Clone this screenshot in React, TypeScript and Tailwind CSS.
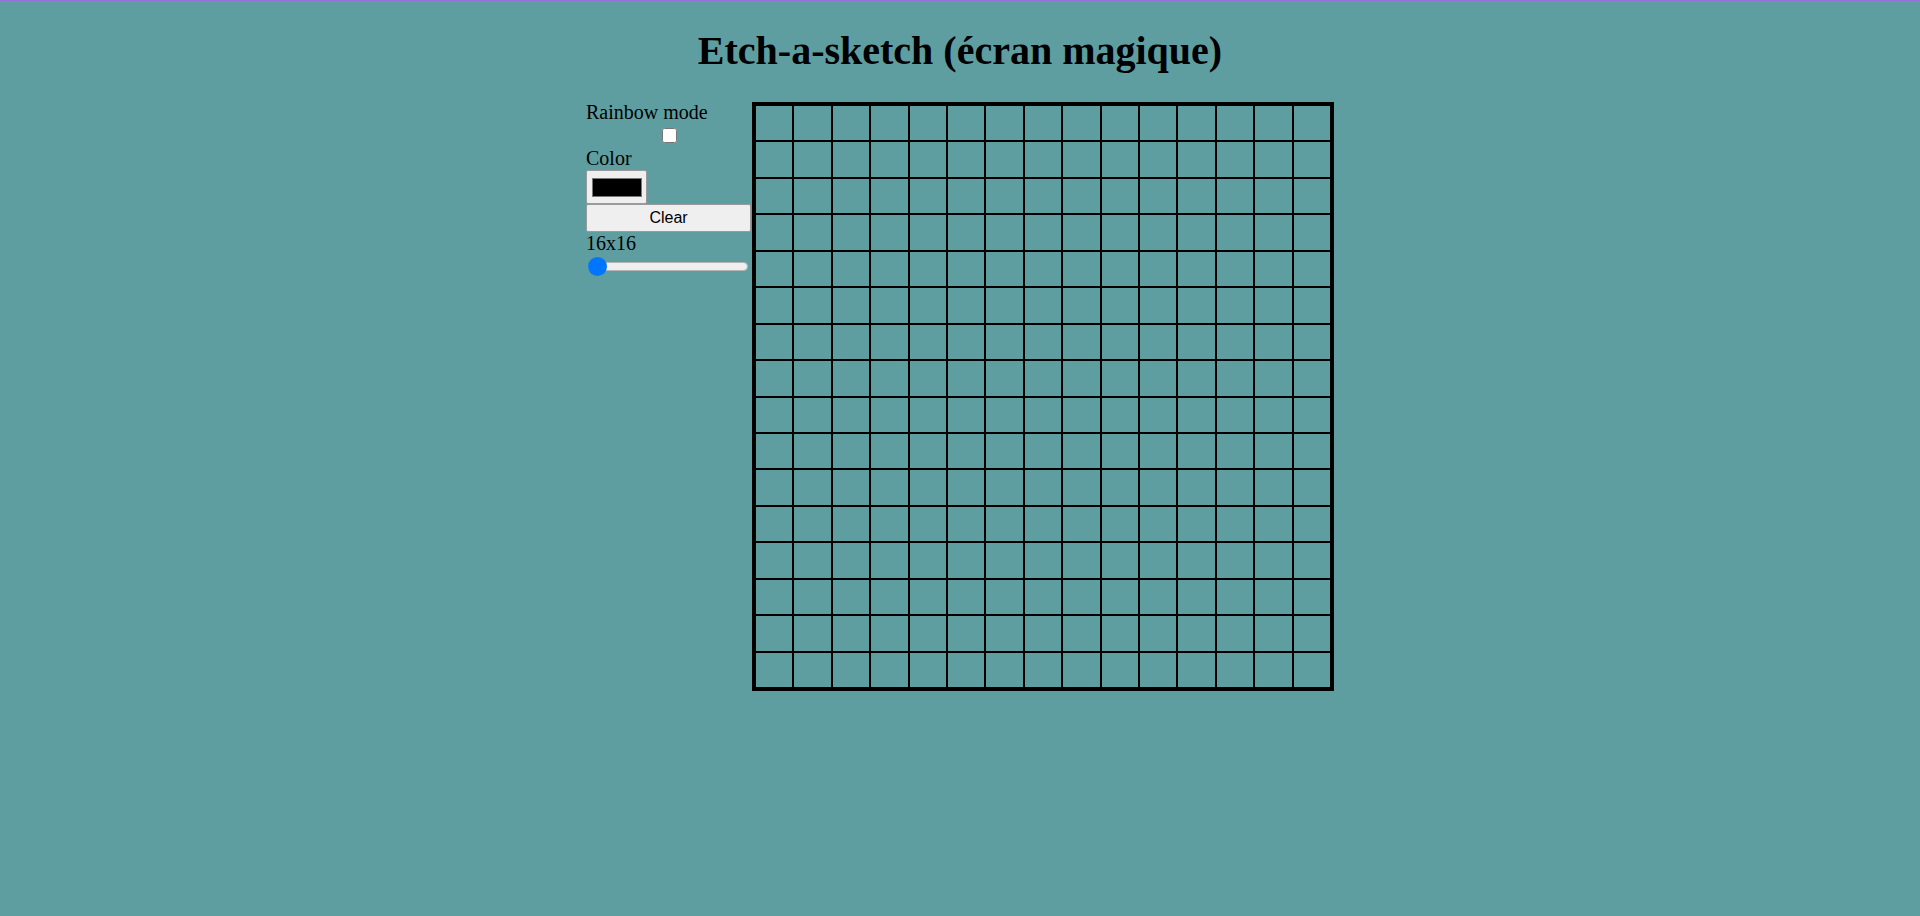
const rows = Array.from({ length: 16 }, (_, i) => i);
const cols = Array.from({ length: 15 }, (_, i) => i);

function Controls() {
  return (
    <div className="w-[166px] flex flex-col">
      <div className="leading-[23px]">Rainbow mode</div>
      <div className="h-[23px] flex items-center justify-center">
        <input type="checkbox" className="w-[15px] h-[15px] m-0" readOnly />
      </div>
      <div className="leading-[23px]">Color</div>
      <div className="w-[61px] h-[34px] bg-[#efefef] border border-[#9a9a9a] rounded-[2px] flex items-center justify-center">
        <div className="w-[50px] h-[19px] bg-black border border-[#777777]" />
      </div>
      <button className="w-[165px] h-[28px] bg-[#efefef] border border-[#9a9a9a] rounded-[2px] font-['Liberation_Sans',Arial,sans-serif] text-[16px] leading-none text-black">
        Clear
      </button>
      <div className="leading-[22px]">16x16</div>
      <div className="relative h-[25px] w-[162px] flex items-center">
        <div className="ml-[2px] w-[160px] h-[9px] rounded-full bg-[#efefef] border border-[#b5b5b5]" />
        <div className="absolute left-[2px] top-[3px] w-[19px] h-[19px] rounded-full bg-[#0075ff]" />
      </div>
    </div>
  );
}

function Board() {
  return (
    <div className="mt-[1px] w-[582px] h-[589px] border-[3px] border-black flex flex-col">
      {rows.map((r) => (
        <div key={r} className="flex flex-1">
          {cols.map((c) => (
            <div key={c} className="flex-1 border border-black" />
          ))}
        </div>
      ))}
    </div>
  );
}

export default function App() {
  return (
    <div className="min-h-[916px] bg-[#5f9ea0] border-t border-[#9370db] text-black font-['Liberation_Serif','Times_New_Roman',serif] text-[20px]">
      <h1 className="text-center text-[40px] font-bold leading-[46px] mt-[27px] mb-[27px]">
        Etch-a-sketch (écran magique)
      </h1>
      <div className="flex justify-center items-start">
        <Controls />
        <Board />
      </div>
    </div>
  );
}
